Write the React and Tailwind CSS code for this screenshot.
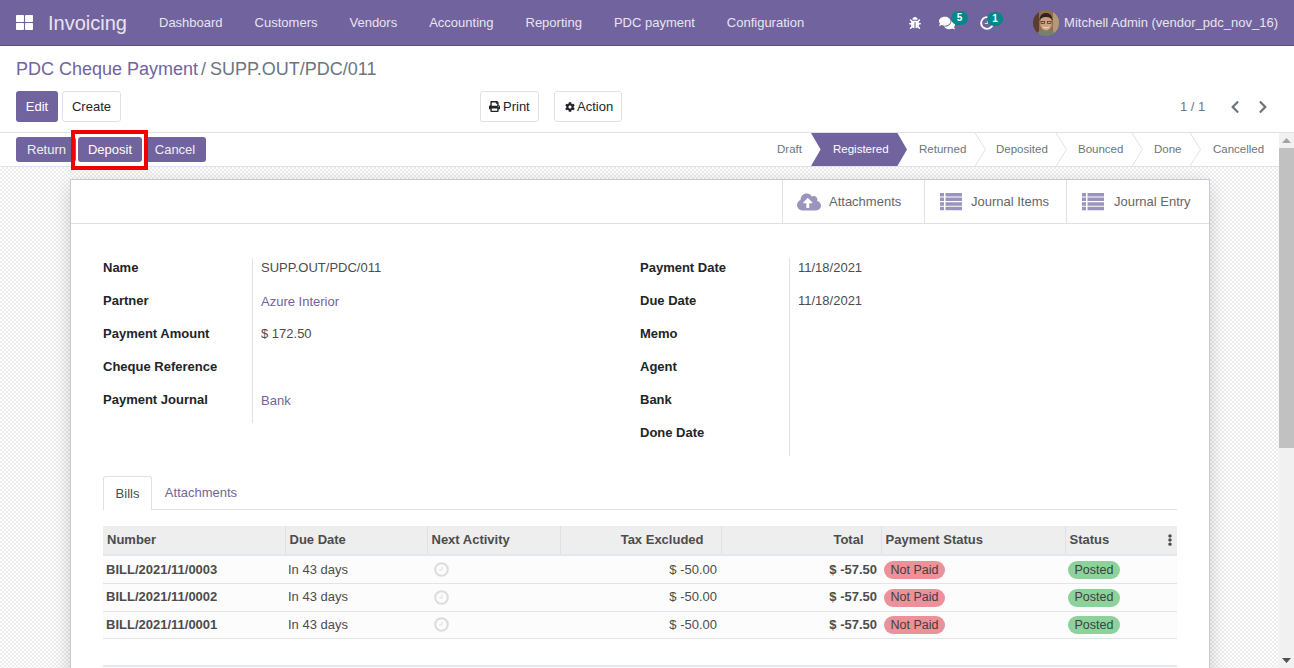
import {
  FaBug,
  FaChevronLeft,
  FaChevronRight,
  FaCloudUploadAlt,
  FaCog,
  FaComments,
  FaEllipsisV,
  FaPrint,
  FaThLarge,
} from "react-icons/fa";

const MENU = ["Dashboard", "Customers", "Vendors", "Accounting", "Reporting", "PDC payment", "Configuration"];

const LEFT_FIELDS = [
  ["Name", "SUPP.OUT/PDC/011"],
  ["Partner", "Azure Interior", true],
  ["Payment Amount", "$ 172.50"],
  ["Cheque Reference", ""],
  ["Payment Journal", "Bank", true],
];

const RIGHT_FIELDS = [
  ["Payment Date", "11/18/2021"],
  ["Due Date", "11/18/2021"],
  ["Memo", ""],
  ["Agent", ""],
  ["Bank", ""],
  ["Done Date", ""],
];

const BILLS = ["BILL/2021/11/0003", "BILL/2021/11/0002", "BILL/2021/11/0001"];

const STEPS = [
  { label: "Returned", w: "w-[73px] pl-[12px]" },
  { label: "Deposited", w: "w-[81px] pl-[16px]" },
  { label: "Bounced", w: "w-[76px] pl-[17px]" },
  { label: "Done", w: "w-[58px] pl-[17px]" },
  { label: "Cancelled", w: "w-[84px] pl-[18px]", last: true },
];

const Avatar = () => (
  <svg className="h-[26px] w-[26px] rounded-full" viewBox="0 0 26 26" aria-hidden="true">
    <rect width="26" height="26" fill="#8f6f4f" />
    <rect x="0" y="0" width="6" height="26" fill="#5a3d2e" />
    <rect x="20" y="0" width="6" height="26" fill="#b39a74" />
    <path d="M3 26c1-5 5-6.500 10-6.500s9 1.500 10 6.500z" fill="#76806f" />
    <ellipse cx="13" cy="13" rx="6" ry="7.500" fill="#cf9f82" />
    <path d="M6.500 11c0-6 3-8 6.500-8s6.500 2 6.500 8c-1-3-3-4-6.500-4s-5.500 1-6.500 4z" fill="#2f231d" />
    <path d="M7.500 11.500h4.500M14 11.500h4.500M8 11.500v2h3.500v-2M14.500 11.500v2H18v-2" fill="none" stroke="#3a2f2b" strokeWidth="0.700" />
    <path d="M10 17c2 1.200 4 1.200 6 0" fill="none" stroke="#f3e6dc" strokeWidth="1" />
  </svg>
);

// fa-list from the old icon set: square bullets with heavy bars
const ListIcon = () => (
  <svg className="h-[18px] w-[22px]" viewBox="0 0 22 18" fill="#9b94bd" aria-hidden="true">
    <path d="M0 0h4v3.500H0zM5.500 0H22v3.500H5.500zM0 4.600h4v3.500H0zM5.500 4.600H22v3.500H5.500zM0 9.200h4v3.500H0zM5.500 9.200H22v3.500H5.500zM0 13.800h4v3.500H0zM5.500 13.800H22v3.500H5.500z" />
  </svg>
);

// clock-o with the thick ring and short hands of the reference
const ClockIcon = ({ className }) => (
  <svg className={className} viewBox="0 0 16 16" fill="none" stroke="currentColor" aria-hidden="true">
    <circle cx="8" cy="8" r="6.700" strokeWidth="2.200" />
    <path d="M8.500 5v3.500H5.500" strokeWidth="1" />
  </svg>
);

const Field = ({ label, value, link }) => (
  <div className="flex h-[33px]">
    <div className="w-[150px] shrink-0 border-r border-[#dee2e6] font-bold text-[#212529]">{label}</div>
    <div className={`pl-2 ${link ? "pt-px text-[#71639e]" : "text-[#4c4c4c]"}`}>{value}</div>
  </div>
);

const StatButton = ({ icon, label, pad }) => (
  <div className={`flex h-full w-[142px] items-center border-l border-[#dee2e6] text-[#666] ${pad}`}>
    {icon}
    <span>{label}</span>
  </div>
);

const Th = ({ children, className = "" }) => (
  <th className={`h-[29px] border-r border-[#dee2e6] pl-1 text-left font-bold text-[#4c4c4c] ${className}`}>{children}</th>
);

export default function App() {
  return (
    <div className="flex h-screen flex-col overflow-hidden bg-white font-['Liberation_Sans',Arial,sans-serif] text-[13px] text-[#4c4c4c]">
      {/* top nav */}
      <nav className="flex h-[46px] shrink-0 items-center border-b border-[#5d5081] bg-[#71639e] pr-4 text-[#e8e5f0]">
        <FaThLarge className="ml-4 h-[17px] w-[17px] text-white" />
        <span className="ml-[15px] w-[95px] text-[20px] leading-none">Invoicing</span>
        <div className="flex">
          {MENU.map((item) => (
            <span key={item} className="px-4">{item}</span>
          ))}
        </div>
        <div className="ml-auto flex items-center">
          <FaBug className="mr-[18px] h-[12px] w-[12px] text-white" />
          <div className="relative mr-[25px] flex">
            <FaComments className="h-[16px] w-[16px] text-white" />
            <span className="absolute -right-[13px] -top-[4px] flex h-[14px] w-[17px] items-center justify-center rounded-full bg-[#00878a] text-[10px] font-bold text-white">5</span>
          </div>
          <div className="relative mr-[39px] flex">
            <ClockIcon className="h-[14px] w-[14px] text-white" />
            <span className="absolute -right-[9px] -top-[4px] flex h-[14px] w-[16px] items-center justify-center rounded-full bg-[#00878a] text-[10px] font-bold text-white">1</span>
          </div>
          <Avatar />
          <span className="ml-[5px]">Mitchell Admin (vendor_pdc_nov_16)</span>
        </div>
      </nav>

      {/* control panel */}
      <header className="h-[87px] shrink-0 border-b border-[#dee2e6] px-4 pt-[10px]">
        <div className="text-[18px] leading-[26px]">
          <span className="text-[#71639e]">PDC Cheque Payment</span>
          <span className="ml-[3px] mr-[4px] text-[#6c757d]">/</span>
          <span className="text-[#6c757d]">SUPP.OUT/PDC/011</span>
        </div>
        <div className="relative mt-[9px] flex h-[31px] items-center">
          <button className="h-[31px] w-[42px] rounded-[3px] bg-[#71639e] text-white">Edit</button>
          <button className="ml-1 h-[31px] w-[59px] rounded-[3px] border border-[#dee2e6] text-[#212529]">Create</button>
          <button className="ml-[359px] flex h-[31px] w-[59px] items-center gap-[3px] rounded-[3px] border border-[#dee2e6] pl-[8px] text-[#212529]">
            <FaPrint className="h-[11px] w-[11px]" /> Print
          </button>
          <button className="ml-[15px] flex h-[31px] w-[68px] items-center gap-[2px] rounded-[3px] border border-[#dee2e6] pl-[10px] text-[#212529]">
            <FaCog className="h-[10px] w-[10px]" /> Action
          </button>
          <span className="ml-[558px] text-[#6c757d]">1 / 1</span>
          <FaChevronLeft className="ml-[23px] h-[14px] w-[14px] text-[#6c757d]" />
          <FaChevronRight className="ml-[14px] h-[14px] w-[14px] text-[#6c757d]" />
        </div>
      </header>

      <div className="flex min-h-0 flex-1">
        <div className="flex min-w-0 flex-1 flex-col">
          {/* status bar */}
          <div className="flex h-[34px] shrink-0 items-center justify-between border-b border-[#dee2e6] pl-4">
            <div className="flex">
              <button className="h-[25px] w-[60px] rounded-[3px] bg-[#71639e] pl-[11px] text-left text-[#f1eff6]">Return</button>
              <div className="relative ml-[2px]">
                <button className="h-[25px] w-[64px] rounded-[3px] bg-[#71639e] text-white">Deposit</button>
                <span className="pointer-events-none absolute -bottom-[8px] -left-[7px] -right-[6px] -top-[7px] border-[4px] border-[#f00000]" />
              </div>
              <button className="ml-[2px] h-[25px] w-[62px] rounded-[3px] bg-[#71639e] text-[#f1eff6]">Cancel</button>
            </div>
            <div className="flex h-full items-stretch text-[11.500px] text-[#6c757d]">
              <div className="flex w-[46px] items-center pl-[12px]">Draft</div>
              <div className="flex w-[96px] items-center bg-[#71639e] pl-[22px] text-white [clip-path:polygon(0_0,90%_0,100%_50%,90%_100%,0_100%,10%_50%)]">Registered</div>
              {STEPS.map((step) => (
                <div key={step.label} className={`relative flex items-center ${step.w}`}>
                  {step.label}
                  {!step.last && (
                    <svg className="absolute -right-[6px] top-0 h-full w-[11px]" viewBox="0 0 11 33" preserveAspectRatio="none" aria-hidden="true">
                      <path d="M0 0l10.500 16.500L0 33" fill="none" stroke="#dee2e6" />
                    </svg>
                  )}
                </div>
              ))}
            </div>
          </div>

          {/* sheet */}
          <div className="min-h-0 flex-1 overflow-hidden bg-[repeating-conic-gradient(#ededed_0_25%,#ffffff_0_50%)] bg-[length:4px_4px] pt-[12px]">
            <div className="ml-[70px] h-[600px] w-[1140px] border border-[#c9c7d6] bg-white shadow-[0_5px_20px_-1px_rgba(0,0,0,0.2)]">
              <div className="flex h-[44px] justify-end border-b border-[#dee2e6] pr-px">
                <StatButton pad="gap-[8px] pl-[14px]" label="Attachments" icon={<FaCloudUploadAlt className="h-[24px] w-[24px] text-[#9b94bd]" />} />
                <StatButton pad="gap-[9px] pl-[15px]" label="Journal Items" icon={<ListIcon />} />
                <StatButton pad="gap-[10px] pl-[15px]" label="Journal Entry" icon={<ListIcon />} />
              </div>

              <div className="px-[32px] pt-[34px]">
                <div className="flex items-start">
                  <div className="w-[537px]">
                    {LEFT_FIELDS.map(([label, value, link]) => (
                      <Field key={label} label={label} value={value} link={link} />
                    ))}
                  </div>
                  <div>
                    {RIGHT_FIELDS.map(([label, value]) => (
                      <Field key={label} label={label} value={value} />
                    ))}
                  </div>
                </div>

                {/* tabs */}
                <div className="mt-[20px] flex h-[34px] border-b border-[#dee2e6]">
                  <div className="-mb-px flex h-[34px] w-[49px] items-center justify-center rounded-t-[3px] border border-b-0 border-[#dee2e6] bg-white">Bills</div>
                  <div className="flex w-[98px] items-center justify-center text-[#71639e]">Attachments</div>
                </div>

                <table className="mt-[16px] w-[1074px] table-fixed border-collapse">
                  <colgroup>
                    <col className="w-[182px]" />
                    <col className="w-[142px]" />
                    <col className="w-[133px]" />
                    <col className="w-[161px]" />
                    <col className="w-[160px]" />
                    <col className="w-[184px]" />
                    <col className="w-[112px]" />
                  </colgroup>
                  <thead>
                    <tr className="border-b-2 border-[#e4e7eb] bg-[#eeeeee]">
                      <Th>Number</Th>
                      <Th>Due Date</Th>
                      <Th>Next Activity</Th>
                      <Th className="!pr-[17px] !text-right">Tax Excluded</Th>
                      <Th className="!pr-[17px] !text-right">Total</Th>
                      <Th>Payment Status</Th>
                      <th className="relative pl-1 text-left font-bold text-[#4c4c4c]">
                        Status
                        <FaEllipsisV className="absolute right-[1px] top-[8px] h-[12px] w-[12px] text-[#4c4c4c]" />
                      </th>
                    </tr>
                  </thead>
                  <tbody>
                    {BILLS.map((bill) => (
                      <tr key={bill} className="h-[28px] border-b border-[#e4e4e4] bg-[#fcfcfc] nth-3:h-[27px]">
                        <td className="pl-[3px] font-bold">{bill}</td>
                        <td className="pl-[3px]">In 43 days</td>
                        <td className="pl-[6px]">
                          <ClockIcon className="ml-px h-[15px] w-[15px] text-[#dcdcdc]" />
                        </td>
                        <td className="pr-1 text-right">$ -50.00</td>
                        <td className="pr-1 text-right font-bold">$ -57.50</td>
                        <td className="pl-[3px]">
                          <span className="inline-flex h-[18px] w-[61px] items-center justify-center rounded-full bg-[#ec9199] text-[12.500px] text-[#3f3f3f]">Not Paid</span>
                        </td>
                        <td className="pl-[3px]">
                          <span className="inline-flex h-[18px] w-[52px] items-center justify-center rounded-full bg-[#8bd39b] text-[12.500px] text-[#3f3f3f]">Posted</span>
                        </td>
                      </tr>
                    ))}
                    <tr className="h-[28px] border-b-2 border-[#e4e7eb]"><td colSpan={7} /></tr>
                  </tbody>
                </table>
              </div>
            </div>
          </div>
        </div>

        {/* scrollbar */}
        <div className="flex w-[15px] shrink-0 flex-col items-center bg-[#f1f1f1]">
          <svg className="mt-[5px] h-[5px] w-[9px] shrink-0" viewBox="0 0 9 5" aria-hidden="true"><path d="M4.500 0L9 5H0z" fill="#a3a3a3" /></svg>
          <div className="mt-[5px] h-[300px] w-full shrink-0 bg-[#c1c1c1]" />
          <svg className="mb-[5px] mt-auto h-[5px] w-[9px] shrink-0" viewBox="0 0 9 5" aria-hidden="true"><path d="M0 0h9L4.500 5z" fill="#505050" /></svg>
        </div>
      </div>
    </div>
  );
}
